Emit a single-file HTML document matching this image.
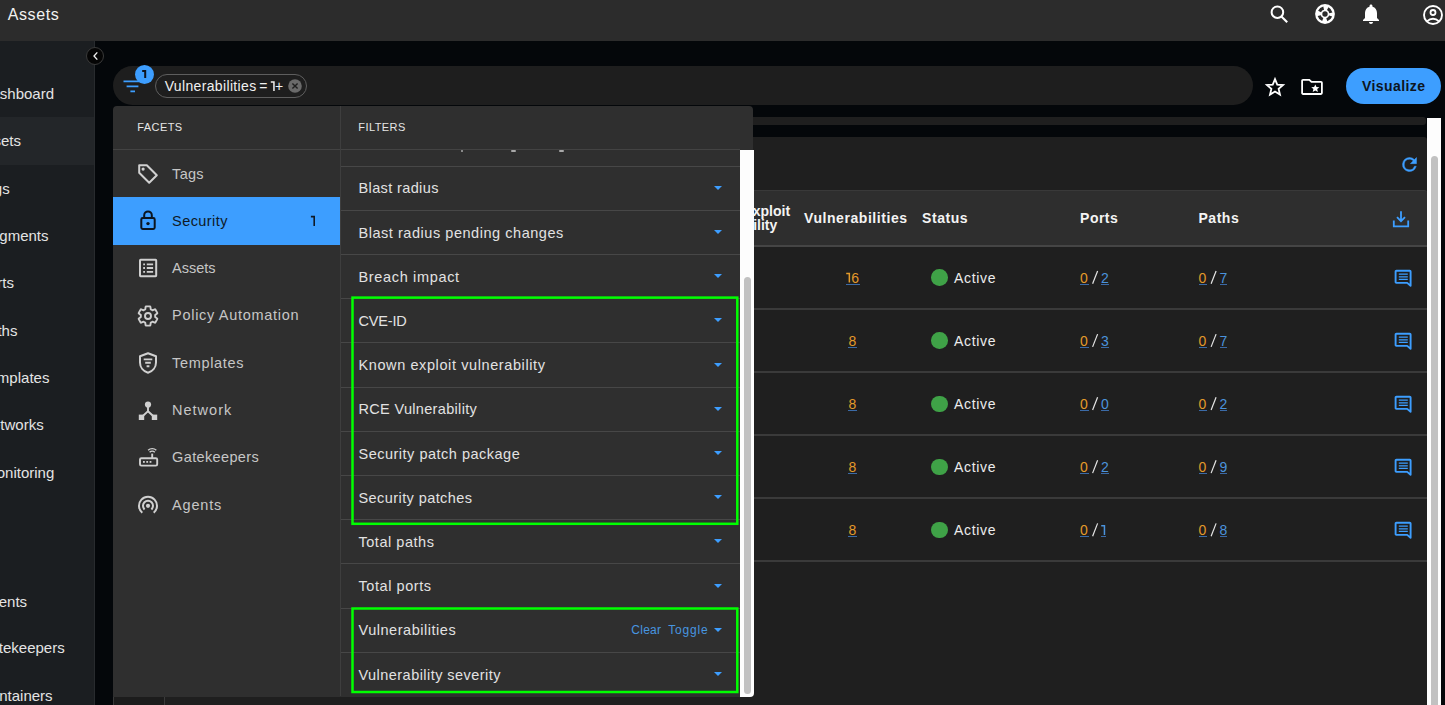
<!DOCTYPE html>
<html><head><meta charset="utf-8"><style>
*{box-sizing:border-box;margin:0;padding:0}
html,body{width:1445px;height:705px;overflow:hidden;background:#04070a;font-family:"Liberation Sans",sans-serif;color:#e6e6e6}
.a{position:absolute}
.t{position:absolute;white-space:nowrap;line-height:1}
svg{position:absolute;display:block;overflow:visible}
</style></head><body>
<div class="a" style="left:0;top:0;width:1445px;height:41px;background:#2c2c2c"></div>
<div class="t" style="left:7.70px;top:7.06px;font-size:16px;color:#f2f2f2;letter-spacing:0.597px;">Assets</div>
<svg style="left:1269px;top:4.2px" width="22" height="22" viewBox="0 0 22 22"><circle cx="8.4" cy="8.2" r="5.8" fill="none" stroke="#fff" stroke-width="2"/><path d="M12.4 12.4L18.2 18.2" stroke="#fff" stroke-width="2.1"/></svg>
<svg style="left:1315px;top:4.3px" width="20" height="20" viewBox="0 0 20 20"><circle cx="10" cy="10" r="9.9" fill="#fff"/><circle cx="10" cy="10" r="6" fill="none" stroke="#2c2c2c" stroke-width="3.2" stroke-dasharray="5.2 4.22" stroke-dashoffset="-2.11"/><circle cx="10" cy="10" r="2.7" fill="#2c2c2c"/></svg>
<svg style="left:1358.9px;top:1.9px" width="24" height="24" viewBox="0 0 24 24"><path d="M12 22c1.1 0 2-.9 2-2h-4c0 1.1.89 2 2 2zm6-6v-5c0-3.07-1.64-5.64-4.5-6.32V4c0-.83-.67-1.5-1.5-1.5s-1.5.67-1.5 1.5v.68C7.63 5.36 6 7.92 6 11v5l-2 2v1h16v-1l-2-2z" fill="#fff"/></svg>
<svg style="left:1423.2px;top:4.6px" width="20" height="20" viewBox="0 0 20 20"><circle cx="10" cy="10" r="9" fill="none" stroke="#fff" stroke-width="1.9"/><circle cx="10" cy="7.5" r="2.5" fill="none" stroke="#fff" stroke-width="1.8"/><path d="M4.3 16.2c1.6-1.6 3.6-2.4 5.7-2.4s4.1.8 5.7 2.4" fill="none" stroke="#fff" stroke-width="1.9"/></svg>
<div class="a" style="left:0;top:41px;width:95px;height:664px;background:#1b1e21;border-right:1px solid #282b2e;overflow:hidden">
<div class="a" style="left:0;top:76px;width:94px;height:48px;background:#232629"></div>
<div class="t" style="right:40.0px;top:45.0px;font-size:15px;color:#e4e4e4">Dashboard</div>
<div class="t" style="right:73.0px;top:92.4px;font-size:15px;color:#e4e4e4">Assets</div>
<div class="t" style="right:84.3px;top:139.8px;font-size:15px;color:#e4e4e4">Tags</div>
<div class="t" style="right:45.5px;top:186.5px;font-size:15px;color:#e4e4e4">Segments</div>
<div class="t" style="right:80.0px;top:234.3px;font-size:15px;color:#e4e4e4">Ports</div>
<div class="t" style="right:76.6px;top:281.8px;font-size:15px;color:#e4e4e4">Paths</div>
<div class="t" style="right:44.6px;top:329.3px;font-size:15px;color:#e4e4e4">Templates</div>
<div class="t" style="right:50.3px;top:376.2px;font-size:15px;color:#e4e4e4">Networks</div>
<div class="t" style="right:39.7px;top:423.7px;font-size:15px;color:#e4e4e4">Monitoring</div>
<div class="t" style="right:66.9px;top:552.5px;font-size:15px;color:#e4e4e4">Events</div>
<div class="t" style="right:29.3px;top:599.3px;font-size:15px;color:#e4e4e4">Gatekeepers</div>
<div class="t" style="right:41.4px;top:646.8px;font-size:15px;color:#e4e4e4">Containers</div>
</div>
<div class="a" style="left:85.5px;top:46.5px;width:18px;height:18px;border-radius:50%;background:#050505;border:1px solid #3a3a3a"></div>
<svg style="left:89.6px;top:49.8px" width="12" height="12" viewBox="0 0 12 12"><path d="M7.3 2.4L4 6l3.3 3.6" fill="none" stroke="#f0f0f0" stroke-width="1.35"/></svg>
<div class="a" style="left:113px;top:66px;width:1140px;height:39px;border-radius:20px;background:#1e1e1e"></div>
<svg style="left:122px;top:79px" width="18" height="14" viewBox="0 0 18 14"><path d="M1.5 2.4h16M4.6 7.4h11.8M8.4 12.3h4.6" stroke="#3d9eff" stroke-width="1.8"/></svg>
<div class="a" style="left:135px;top:65px;width:19px;height:19px;border-radius:50%;background:#3d9eff"></div>
<svg style="left:0;top:0" width="1445" height="705" viewBox="0 0 1445 705"><path d="M142.20 71.10H145.20V77.90" fill="none" stroke="#0f1520" stroke-width="2.0"/></svg>
<div class="a" style="left:155px;top:74px;width:152px;height:24px;border:1px solid #5e5e5e;border-radius:12px"></div>
<div class="t" style="left:164.70px;top:78.95px;font-size:14px;color:#f0f0f0;letter-spacing:0.347px;">Vulnerabilities</div>
<div class="t" style="left:260.20px;top:78.95px;font-size:14px;color:#f0f0f0;letter-spacing:0.000px;margin-left:-1px">=</div>
<svg style="left:0;top:0" width="1445" height="705" viewBox="0 0 1445 705"><path d="M270.80 82.05H273.95V90.90" fill="none" stroke="#f0f0f0" stroke-width="1.5"/></svg>
<div class="t" style="left:275.60px;top:78.95px;font-size:14px;color:#f0f0f0;letter-spacing:0.000px;margin-left:-0.6px">+</div>
<svg style="left:287.5px;top:79px" width="14" height="14" viewBox="0 0 14 14"><circle cx="7" cy="7" r="6.8" fill="#6a6a6a"/><path d="M4.4 4.4l5.2 5.2M9.6 4.4l-5.2 5.2" stroke="#1f1f1f" stroke-width="1.4"/></svg>
<svg style="left:1264.5px;top:76.5px" width="20" height="19" viewBox="0 0 22 21"><path d="M11 2.4l2.5 6 6.4.5-4.9 4.2 1.5 6.3L11 16l-5.5 3.4L7 13.1 2.1 8.9l6.4-.5z" fill="none" stroke="#fff" stroke-width="2" stroke-linejoin="miter"/></svg>
<svg style="left:1300.5px;top:77.5px" width="22" height="18" viewBox="0 0 22 18"><path d="M2 1.8h6.3l2.2 2.1h9.5c.5 0 .9.4.9.9v10.3c0 .5-.4.9-.9.9H2c-.5 0-.9-.4-.9-.9V2.7c0-.5.4-.9.9-.9z" fill="none" stroke="#fff" stroke-width="1.8"/><path d="M14.3 6.4l1.2 2.6 2.9.2-2.2 1.9.7 2.8-2.6-1.5-2.6 1.5.7-2.8-2.2-1.9 2.9-.2z" fill="#fff"/></svg>
<div class="a" style="left:1346px;top:68px;width:95px;height:36px;border-radius:18px;background:#3d9eff"></div>
<div class="t" style="left:1362.00px;top:78.65px;font-size:14px;font-weight:bold;color:#0d1520;letter-spacing:0.417px;">Visualize</div>
<div class="a" style="left:113px;top:117px;width:1313px;height:8px;background:#1f1f1f;border-radius:3px"></div>
<div class="a" style="left:113px;top:137px;width:1314px;height:570px;background:#1f1f1f;border-radius:3px"></div>
<svg style="left:1399px;top:154px" width="21" height="21" viewBox="0 0 24 24"><path d="M17.65 6.35A7.96 7.96 0 0 0 12 4a8 8 0 1 0 7.73 10h-2.08A6 6 0 1 1 12 6c1.66 0 3.14.69 4.22 1.78L13 11h7V4l-2.35 2.35z" fill="#3d9eff" stroke="#3d9eff" stroke-width=".5"/></svg>
<div class="a" style="left:113px;top:190px;width:1314px;height:56px;background:#2e2e2e;border-radius:3px 3px 0 0;border-top:1px solid #393939"></div>
<div class="a" style="left:113px;top:244.5px;width:1314px;height:2px;background:#454545"></div>
<div class="t" style="left:694.44px;top:204.25px;font-size:14px;font-weight:bold;color:#f4f4f4;letter-spacing:0.000px;">Known exploit</div>
<div class="t" style="left:694.83px;top:217.75px;font-size:14px;font-weight:bold;color:#f4f4f4;letter-spacing:0.000px;">vulnerability</div>
<div class="t" style="left:804.00px;top:211.15px;font-size:14px;font-weight:bold;color:#f4f4f4;letter-spacing:0.566px;">Vulnerabilities</div>
<div class="t" style="left:922.10px;top:211.15px;font-size:14px;font-weight:bold;color:#f4f4f4;letter-spacing:0.543px;">Status</div>
<div class="t" style="left:1080.10px;top:211.15px;font-size:14px;font-weight:bold;color:#f4f4f4;letter-spacing:0.478px;">Ports</div>
<div class="t" style="left:1198.50px;top:211.15px;font-size:14px;font-weight:bold;color:#f4f4f4;letter-spacing:0.519px;">Paths</div>
<svg style="left:1392px;top:209px" width="18" height="19" viewBox="0 0 18 19"><path d="M9 2.2v10M5 8.2l4 4 4-4" fill="none" stroke="#3d9eff" stroke-width="1.8"/><path d="M1.8 11.5v5.8h14.4v-5.8" fill="none" stroke="#3d9eff" stroke-width="1.8"/></svg>
<div class="a" style="left:113px;top:307.6px;width:1314px;height:2px;background:#3a3a3a"></div>
<svg style="left:0;top:0" width="1445" height="705" viewBox="0 0 1445 705"><path d="M846.20 273.55H849.35V282.60" fill="none" stroke="#e39a2a" stroke-width="1.5"/></svg>
<div class="t" style="left:851.20px;top:270.75px;font-size:14px;color:#e39a2a;letter-spacing:0.000px;">6</div>
<div class="a" style="left:846px;top:283.9px;width:14px;height:1px;background:#3b6aa6"></div>
<div class="a" style="left:931.3px;top:269.3px;width:16.6px;height:16.6px;border-radius:50%;background:#3fa247"></div>
<div class="t" style="left:953.90px;top:270.75px;font-size:14px;color:#ececec;letter-spacing:0.715px;">Active</div>
<div class="t" style="left:1080.00px;top:270.75px;font-size:14px;color:#e39a2a;letter-spacing:0.000px;">0</div>
<div class="a" style="left:1080.0px;top:283.9px;width:8.8px;height:1px;background:#3b6aa6"></div>
<svg style="left:0;top:0" width="1445" height="705" viewBox="0 0 1445 705"><path d="M1097.60 271.00L1092.60 283.80" stroke="#e6e6e6" stroke-width="1.2"/></svg>
<div class="t" style="left:1101.00px;top:270.75px;font-size:14px;color:#4b93dc;letter-spacing:0.000px;">2</div>
<div class="a" style="left:1101.4px;top:283.9px;width:7.6px;height:1px;background:#3b6aa6"></div>
<div class="t" style="left:1198.50px;top:270.75px;font-size:14px;color:#e39a2a;letter-spacing:0.000px;">0</div>
<div class="a" style="left:1198.5px;top:283.9px;width:8.8px;height:1px;background:#3b6aa6"></div>
<svg style="left:0;top:0" width="1445" height="705" viewBox="0 0 1445 705"><path d="M1216.10 271.00L1211.10 283.80" stroke="#e6e6e6" stroke-width="1.2"/></svg>
<div class="t" style="left:1219.50px;top:270.75px;font-size:14px;color:#4b93dc;letter-spacing:0.000px;">7</div>
<div class="a" style="left:1219.9px;top:283.9px;width:7.6px;height:1px;background:#3b6aa6"></div>
<svg style="left:1394.3px;top:268.9px" width="19" height="19" viewBox="0 0 19 19"><path d="M2.4 1.8h13.4c.5 0 .8.3.8.8v14.2l-3.4-2.9H2.4c-.5 0-.8-.3-.8-.8V2.6c0-.5.3-.8.8-.8z" fill="none" stroke="#3d9eff" stroke-width="1.9" stroke-linejoin="round"/><path d="M4.8 5.2h9M4.8 7.8h9M4.8 10.3h9" stroke="#3d9eff" stroke-width="1.3"/></svg>
<div class="a" style="left:113px;top:370.7px;width:1314px;height:2px;background:#3a3a3a"></div>
<div class="t" style="left:848.60px;top:333.85px;font-size:14px;color:#e39a2a;letter-spacing:0.000px;">8</div>
<div class="a" style="left:848.3px;top:347.0px;width:8.8px;height:1px;background:#3b6aa6"></div>
<div class="a" style="left:931.3px;top:332.4px;width:16.6px;height:16.6px;border-radius:50%;background:#3fa247"></div>
<div class="t" style="left:953.90px;top:333.85px;font-size:14px;color:#ececec;letter-spacing:0.715px;">Active</div>
<div class="t" style="left:1080.00px;top:333.85px;font-size:14px;color:#e39a2a;letter-spacing:0.000px;">0</div>
<div class="a" style="left:1080.0px;top:347.0px;width:8.8px;height:1px;background:#3b6aa6"></div>
<svg style="left:0;top:0" width="1445" height="705" viewBox="0 0 1445 705"><path d="M1097.60 334.10L1092.60 346.90" stroke="#e6e6e6" stroke-width="1.2"/></svg>
<div class="t" style="left:1101.00px;top:333.85px;font-size:14px;color:#4b93dc;letter-spacing:0.000px;">3</div>
<div class="a" style="left:1101.4px;top:347.0px;width:7.6px;height:1px;background:#3b6aa6"></div>
<div class="t" style="left:1198.50px;top:333.85px;font-size:14px;color:#e39a2a;letter-spacing:0.000px;">0</div>
<div class="a" style="left:1198.5px;top:347.0px;width:8.8px;height:1px;background:#3b6aa6"></div>
<svg style="left:0;top:0" width="1445" height="705" viewBox="0 0 1445 705"><path d="M1216.10 334.10L1211.10 346.90" stroke="#e6e6e6" stroke-width="1.2"/></svg>
<div class="t" style="left:1219.50px;top:333.85px;font-size:14px;color:#4b93dc;letter-spacing:0.000px;">7</div>
<div class="a" style="left:1219.9px;top:347.0px;width:7.6px;height:1px;background:#3b6aa6"></div>
<svg style="left:1394.3px;top:332.0px" width="19" height="19" viewBox="0 0 19 19"><path d="M2.4 1.8h13.4c.5 0 .8.3.8.8v14.2l-3.4-2.9H2.4c-.5 0-.8-.3-.8-.8V2.6c0-.5.3-.8.8-.8z" fill="none" stroke="#3d9eff" stroke-width="1.9" stroke-linejoin="round"/><path d="M4.8 5.2h9M4.8 7.8h9M4.8 10.3h9" stroke="#3d9eff" stroke-width="1.3"/></svg>
<div class="a" style="left:113px;top:433.8px;width:1314px;height:2px;background:#3a3a3a"></div>
<div class="t" style="left:848.60px;top:396.95px;font-size:14px;color:#e39a2a;letter-spacing:0.000px;">8</div>
<div class="a" style="left:848.3px;top:410.1px;width:8.8px;height:1px;background:#3b6aa6"></div>
<div class="a" style="left:931.3px;top:395.5px;width:16.6px;height:16.6px;border-radius:50%;background:#3fa247"></div>
<div class="t" style="left:953.90px;top:396.95px;font-size:14px;color:#ececec;letter-spacing:0.715px;">Active</div>
<div class="t" style="left:1080.00px;top:396.95px;font-size:14px;color:#e39a2a;letter-spacing:0.000px;">0</div>
<div class="a" style="left:1080.0px;top:410.1px;width:8.8px;height:1px;background:#3b6aa6"></div>
<svg style="left:0;top:0" width="1445" height="705" viewBox="0 0 1445 705"><path d="M1097.60 397.20L1092.60 410.00" stroke="#e6e6e6" stroke-width="1.2"/></svg>
<div class="t" style="left:1101.00px;top:396.95px;font-size:14px;color:#4b93dc;letter-spacing:0.000px;">0</div>
<div class="a" style="left:1101.4px;top:410.1px;width:7.6px;height:1px;background:#3b6aa6"></div>
<div class="t" style="left:1198.50px;top:396.95px;font-size:14px;color:#e39a2a;letter-spacing:0.000px;">0</div>
<div class="a" style="left:1198.5px;top:410.1px;width:8.8px;height:1px;background:#3b6aa6"></div>
<svg style="left:0;top:0" width="1445" height="705" viewBox="0 0 1445 705"><path d="M1216.10 397.20L1211.10 410.00" stroke="#e6e6e6" stroke-width="1.2"/></svg>
<div class="t" style="left:1219.50px;top:396.95px;font-size:14px;color:#4b93dc;letter-spacing:0.000px;">2</div>
<div class="a" style="left:1219.9px;top:410.1px;width:7.6px;height:1px;background:#3b6aa6"></div>
<svg style="left:1394.3px;top:395.1px" width="19" height="19" viewBox="0 0 19 19"><path d="M2.4 1.8h13.4c.5 0 .8.3.8.8v14.2l-3.4-2.9H2.4c-.5 0-.8-.3-.8-.8V2.6c0-.5.3-.8.8-.8z" fill="none" stroke="#3d9eff" stroke-width="1.9" stroke-linejoin="round"/><path d="M4.8 5.2h9M4.8 7.8h9M4.8 10.3h9" stroke="#3d9eff" stroke-width="1.3"/></svg>
<div class="a" style="left:113px;top:496.9px;width:1314px;height:2px;background:#3a3a3a"></div>
<div class="t" style="left:848.60px;top:460.05px;font-size:14px;color:#e39a2a;letter-spacing:0.000px;">8</div>
<div class="a" style="left:848.3px;top:473.2px;width:8.8px;height:1px;background:#3b6aa6"></div>
<div class="a" style="left:931.3px;top:458.6px;width:16.6px;height:16.6px;border-radius:50%;background:#3fa247"></div>
<div class="t" style="left:953.90px;top:460.05px;font-size:14px;color:#ececec;letter-spacing:0.715px;">Active</div>
<div class="t" style="left:1080.00px;top:460.05px;font-size:14px;color:#e39a2a;letter-spacing:0.000px;">0</div>
<div class="a" style="left:1080.0px;top:473.2px;width:8.8px;height:1px;background:#3b6aa6"></div>
<svg style="left:0;top:0" width="1445" height="705" viewBox="0 0 1445 705"><path d="M1097.60 460.30L1092.60 473.10" stroke="#e6e6e6" stroke-width="1.2"/></svg>
<div class="t" style="left:1101.00px;top:460.05px;font-size:14px;color:#4b93dc;letter-spacing:0.000px;">2</div>
<div class="a" style="left:1101.4px;top:473.2px;width:7.6px;height:1px;background:#3b6aa6"></div>
<div class="t" style="left:1198.50px;top:460.05px;font-size:14px;color:#e39a2a;letter-spacing:0.000px;">0</div>
<div class="a" style="left:1198.5px;top:473.2px;width:8.8px;height:1px;background:#3b6aa6"></div>
<svg style="left:0;top:0" width="1445" height="705" viewBox="0 0 1445 705"><path d="M1216.10 460.30L1211.10 473.10" stroke="#e6e6e6" stroke-width="1.2"/></svg>
<div class="t" style="left:1219.50px;top:460.05px;font-size:14px;color:#4b93dc;letter-spacing:0.000px;">9</div>
<div class="a" style="left:1219.9px;top:473.2px;width:7.6px;height:1px;background:#3b6aa6"></div>
<svg style="left:1394.3px;top:458.2px" width="19" height="19" viewBox="0 0 19 19"><path d="M2.4 1.8h13.4c.5 0 .8.3.8.8v14.2l-3.4-2.9H2.4c-.5 0-.8-.3-.8-.8V2.6c0-.5.3-.8.8-.8z" fill="none" stroke="#3d9eff" stroke-width="1.9" stroke-linejoin="round"/><path d="M4.8 5.2h9M4.8 7.8h9M4.8 10.3h9" stroke="#3d9eff" stroke-width="1.3"/></svg>
<div class="a" style="left:113px;top:560.0px;width:1314px;height:2px;background:#3a3a3a"></div>
<div class="t" style="left:848.60px;top:523.15px;font-size:14px;color:#e39a2a;letter-spacing:0.000px;">8</div>
<div class="a" style="left:848.3px;top:536.3px;width:8.8px;height:1px;background:#3b6aa6"></div>
<div class="a" style="left:931.3px;top:521.7px;width:16.6px;height:16.6px;border-radius:50%;background:#3fa247"></div>
<div class="t" style="left:953.90px;top:523.15px;font-size:14px;color:#ececec;letter-spacing:0.715px;">Active</div>
<div class="t" style="left:1080.00px;top:523.15px;font-size:14px;color:#e39a2a;letter-spacing:0.000px;">0</div>
<div class="a" style="left:1080.0px;top:536.3px;width:8.8px;height:1px;background:#3b6aa6"></div>
<svg style="left:0;top:0" width="1445" height="705" viewBox="0 0 1445 705"><path d="M1097.60 523.40L1092.60 536.20" stroke="#e6e6e6" stroke-width="1.2"/></svg>
<svg style="left:0;top:0" width="1445" height="705" viewBox="0 0 1445 705"><path d="M1101.20 525.85H1104.45V535.00" fill="none" stroke="#4b93dc" stroke-width="1.5"/></svg>
<div class="a" style="left:1101.2px;top:536.3px;width:5px;height:1px;background:#3b6aa6"></div>
<div class="t" style="left:1198.50px;top:523.15px;font-size:14px;color:#e39a2a;letter-spacing:0.000px;">0</div>
<div class="a" style="left:1198.5px;top:536.3px;width:8.8px;height:1px;background:#3b6aa6"></div>
<svg style="left:0;top:0" width="1445" height="705" viewBox="0 0 1445 705"><path d="M1216.10 523.40L1211.10 536.20" stroke="#e6e6e6" stroke-width="1.2"/></svg>
<div class="t" style="left:1219.50px;top:523.15px;font-size:14px;color:#4b93dc;letter-spacing:0.000px;">8</div>
<div class="a" style="left:1219.9px;top:536.3px;width:7.6px;height:1px;background:#3b6aa6"></div>
<svg style="left:1394.3px;top:521.3px" width="19" height="19" viewBox="0 0 19 19"><path d="M2.4 1.8h13.4c.5 0 .8.3.8.8v14.2l-3.4-2.9H2.4c-.5 0-.8-.3-.8-.8V2.6c0-.5.3-.8.8-.8z" fill="none" stroke="#3d9eff" stroke-width="1.9" stroke-linejoin="round"/><path d="M4.8 5.2h9M4.8 7.8h9M4.8 10.3h9" stroke="#3d9eff" stroke-width="1.3"/></svg>
<div class="a" style="left:1427px;top:117.5px;width:14px;height:590px;background:#fdfdfd"></div>
<div class="a" style="left:1431px;top:156px;width:7px;height:560px;background:#c1c1c1;border-radius:4px"></div>
<div class="a" style="left:113px;top:106px;width:640px;height:590.5px;background:#2f2f2f;border-radius:4px 4px 4px 0;overflow:hidden"></div>
<div class="a" style="left:113px;top:149px;width:627px;height:1px;background:#434343"></div>
<div class="a" style="left:340px;top:106px;width:1px;height:590px;background:#3e3e3e"></div>
<div class="t" style="left:137.30px;top:121.79px;font-size:11px;color:#e6e6e6;letter-spacing:0.423px;">FACETS</div>
<div class="t" style="left:358.30px;top:121.79px;font-size:11px;color:#e6e6e6;letter-spacing:0.431px;">FILTERS</div>
<div class="a" style="left:113px;top:197px;width:227px;height:48px;background:#3d9eff"></div>
<div class="t" style="left:172.10px;top:166.53px;font-size:14.5px;color:#c6c6c6;letter-spacing:0.291px;">Tags</div>
<div class="t" style="left:172.10px;top:213.83px;font-size:14.5px;color:#0f1a26;letter-spacing:0.417px;">Security</div>
<div class="t" style="left:172.10px;top:261.13px;font-size:14.5px;color:#c6c6c6;letter-spacing:-0.003px;">Assets</div>
<div class="t" style="left:172.10px;top:308.43px;font-size:14.5px;color:#c6c6c6;letter-spacing:0.696px;">Policy Automation</div>
<div class="t" style="left:172.10px;top:355.73px;font-size:14.5px;color:#c6c6c6;letter-spacing:0.652px;">Templates</div>
<div class="t" style="left:172.10px;top:403.03px;font-size:14.5px;color:#c6c6c6;letter-spacing:0.987px;">Network</div>
<div class="t" style="left:172.10px;top:450.33px;font-size:14.5px;color:#c6c6c6;letter-spacing:0.358px;">Gatekeepers</div>
<div class="t" style="left:172.10px;top:497.63px;font-size:14.5px;color:#c6c6c6;letter-spacing:0.811px;">Agents</div>
<svg style="left:0;top:0" width="1445" height="705" viewBox="0 0 1445 705"><path d="M310.90 216.60H314.20V226.10" fill="none" stroke="#0f1a26" stroke-width="1.6"/></svg>
<svg style="left:136px;top:162px" width="24" height="24" viewBox="0 0 24 24"><path d="M3.2 3.2h7.6l10 10-7.6 7.6-10-10z" fill="none" stroke="#d0d0d0" stroke-width="2" stroke-linejoin="round"/><circle cx="7.1" cy="7.1" r="1.6" fill="#d0d0d0"/></svg>
<svg style="left:136px;top:208px" width="24" height="24" viewBox="0 0 24 24"><path d="M8.2 10V7.2a3.8 3.8 0 0 1 7.6 0V10" fill="none" stroke="#0b1520" stroke-width="2"/><rect x="5.3" y="10" width="13.4" height="11" rx="1.4" fill="none" stroke="#0b1520" stroke-width="2"/><circle cx="12" cy="15.6" r="1.7" fill="#0b1520"/></svg>
<svg style="left:136px;top:256px" width="24" height="24" viewBox="0 0 24 24"><rect x="4" y="3.8" width="16.2" height="16.4" rx=".6" fill="none" stroke="#d0d0d0" stroke-width="2"/><path d="M7.2 8.3h1.8M7.2 12h1.8M7.2 15.8h1.8M10.8 8.3h6.3M10.8 12h6.3M10.8 15.8h6.3" stroke="#d0d0d0" stroke-width="1.8"/></svg>
<svg style="left:136px;top:303.5px" width="24" height="24" viewBox="0 0 24 24"><path d="M19.14 12.94c.04-.3.06-.61.06-.94 0-.32-.02-.64-.07-.94l2.03-1.58a.49.49 0 0 0 .12-.61l-1.92-3.32a.488.488 0 0 0-.59-.22l-2.39.96c-.5-.38-1.03-.7-1.62-.94l-.36-2.54a.484.484 0 0 0-.48-.41h-3.84c-.24 0-.43.17-.47.41l-.36 2.54c-.59.24-1.13.57-1.62.94l-2.39-.96c-.22-.08-.47 0-.59.22L2.74 8.87c-.12.21-.08.47.12.61l2.03 1.58c-.05.3-.09.63-.09.94s.02.64.07.94l-2.03 1.58a.49.49 0 0 0-.12.61l1.92 3.32c.12.22.37.29.59.22l2.39-.96c.5.38 1.03.7 1.62.94l.36 2.54c.05.24.24.41.48.41h3.84c.24 0 .44-.17.47-.41l.36-2.54c.59-.24 1.13-.56 1.62-.94l2.39.96c.22.08.47 0 .59-.22l1.92-3.32c.12-.22.07-.47-.12-.61l-2.01-1.58z" fill="none" stroke="#d0d0d0" stroke-width="1.9" stroke-linejoin="round"/><circle cx="12" cy="12" r="3" fill="none" stroke="#d0d0d0" stroke-width="1.9"/></svg>
<svg style="left:136px;top:350.5px" width="24" height="24" viewBox="0 0 24 24"><path d="M12 2.2l8 3v6.3c0 4.8-3.3 8.9-8 10.3-4.7-1.4-8-5.5-8-10.3V5.2z" fill="none" stroke="#d0d0d0" stroke-width="2" stroke-linejoin="round"/><path d="M7.7 8.4h8.6M9.2 11.8h5.6M10.6 15.2h2.8" stroke="#d0d0d0" stroke-width="1.9"/></svg>
<svg style="left:136px;top:397.5px" width="24" height="24" viewBox="0 0 24 24"><circle cx="12" cy="6.6" r="3.1" fill="#d0d0d0"/><path d="M12 8v5.2L5.5 19.2M12 13.2l6.5 6" fill="none" stroke="#d0d0d0" stroke-width="1.9"/><rect x="2.8" y="16.6" width="5.4" height="5.4" fill="#d0d0d0"/><rect x="15.8" y="16.6" width="5.4" height="5.4" fill="#d0d0d0"/></svg>
<svg style="left:136px;top:445px" width="24" height="24" viewBox="0 0 24 24"><rect x="4" y="13.2" width="17.2" height="7.4" rx="1.4" fill="none" stroke="#d0d0d0" stroke-width="1.9"/><path d="M16.2 13.2V8.6" stroke="#d0d0d0" stroke-width="1.9"/><path d="M13.6 7.2a3.7 3.7 0 0 1 5.2 0M12.1 5.2a6 6 0 0 1 8.2 0" fill="none" stroke="#d0d0d0" stroke-width="1.4"/><rect x="7" y="16" width="1.8" height="1.8" fill="#d0d0d0"/><rect x="10.3" y="16" width="1.8" height="1.8" fill="#d0d0d0"/><rect x="13.6" y="16" width="1.8" height="1.8" fill="#d0d0d0"/></svg>
<svg style="left:136px;top:492.5px" width="24" height="24" viewBox="0 0 24 24"><circle cx="12" cy="12.8" r="2.1" fill="#d0d0d0"/><path d="M8.6 16.4a5 5 0 1 1 6.8 0M6.3 19.7a9 9 0 1 1 11.4 0" fill="none" stroke="#d0d0d0" stroke-width="2"/></svg>
<div class="a" style="left:341px;top:150px;width:399px;height:546px;overflow:hidden">
<div class="a" style="left:0;top:15.5px;width:399px;height:1px;background:#474747"></div>
<div class="a" style="left:0;top:59.7px;width:399px;height:1px;background:#474747"></div>
<div class="a" style="left:0;top:103.9px;width:399px;height:1px;background:#474747"></div>
<div class="a" style="left:0;top:148.1px;width:399px;height:1px;background:#474747"></div>
<div class="a" style="left:0;top:192.3px;width:399px;height:1px;background:#474747"></div>
<div class="a" style="left:0;top:236.5px;width:399px;height:1px;background:#474747"></div>
<div class="a" style="left:0;top:280.7px;width:399px;height:1px;background:#474747"></div>
<div class="a" style="left:0;top:324.9px;width:399px;height:1px;background:#474747"></div>
<div class="a" style="left:0;top:369.1px;width:399px;height:1px;background:#474747"></div>
<div class="a" style="left:0;top:413.3px;width:399px;height:1px;background:#474747"></div>
<div class="a" style="left:0;top:457.5px;width:399px;height:1px;background:#474747"></div>
<div class="a" style="left:0;top:501.7px;width:399px;height:1px;background:#474747"></div>
</div>
<div class="a" style="left:461.3px;top:150.2px;width:2px;height:1.4px;border-radius:1px;background:#a8a8a8"></div>
<div class="a" style="left:511.4px;top:150.2px;width:4.5px;height:1.4px;border-radius:1px;background:#a8a8a8"></div>
<div class="a" style="left:559.0px;top:150.2px;width:4.5px;height:1.4px;border-radius:1px;background:#a8a8a8"></div>
<div class="t" style="left:358.50px;top:181.33px;font-size:14.5px;color:#e2e2e2;letter-spacing:0.377px;">Blast radius</div>
<div class="a" style="left:714px;top:185.8px;width:0;height:0;border-left:4.1px solid transparent;border-right:4.1px solid transparent;border-top:4.6px solid #3d9eff"></div>
<div class="t" style="left:358.50px;top:225.53px;font-size:14.5px;color:#e2e2e2;letter-spacing:0.539px;">Blast radius pending changes</div>
<div class="a" style="left:714px;top:230.0px;width:0;height:0;border-left:4.1px solid transparent;border-right:4.1px solid transparent;border-top:4.6px solid #3d9eff"></div>
<div class="t" style="left:358.50px;top:269.73px;font-size:14.5px;color:#e2e2e2;letter-spacing:0.660px;">Breach impact</div>
<div class="a" style="left:714px;top:274.2px;width:0;height:0;border-left:4.1px solid transparent;border-right:4.1px solid transparent;border-top:4.6px solid #3d9eff"></div>
<div class="t" style="left:358.50px;top:313.93px;font-size:14.5px;color:#e2e2e2;letter-spacing:-0.189px;">CVE-ID</div>
<div class="a" style="left:714px;top:318.4px;width:0;height:0;border-left:4.1px solid transparent;border-right:4.1px solid transparent;border-top:4.6px solid #3d9eff"></div>
<div class="t" style="left:358.50px;top:358.13px;font-size:14.5px;color:#e2e2e2;letter-spacing:0.597px;">Known exploit vulnerability</div>
<div class="a" style="left:714px;top:362.6px;width:0;height:0;border-left:4.1px solid transparent;border-right:4.1px solid transparent;border-top:4.6px solid #3d9eff"></div>
<div class="t" style="left:358.50px;top:402.33px;font-size:14.5px;color:#e2e2e2;letter-spacing:0.326px;">RCE Vulnerability</div>
<div class="a" style="left:714px;top:406.8px;width:0;height:0;border-left:4.1px solid transparent;border-right:4.1px solid transparent;border-top:4.6px solid #3d9eff"></div>
<div class="t" style="left:358.50px;top:446.53px;font-size:14.5px;color:#e2e2e2;letter-spacing:0.499px;">Security patch package</div>
<div class="a" style="left:714px;top:451.0px;width:0;height:0;border-left:4.1px solid transparent;border-right:4.1px solid transparent;border-top:4.6px solid #3d9eff"></div>
<div class="t" style="left:358.50px;top:490.73px;font-size:14.5px;color:#e2e2e2;letter-spacing:0.421px;">Security patches</div>
<div class="a" style="left:714px;top:495.2px;width:0;height:0;border-left:4.1px solid transparent;border-right:4.1px solid transparent;border-top:4.6px solid #3d9eff"></div>
<div class="t" style="left:358.50px;top:534.93px;font-size:14.5px;color:#e2e2e2;letter-spacing:0.527px;">Total paths</div>
<div class="a" style="left:714px;top:539.4px;width:0;height:0;border-left:4.1px solid transparent;border-right:4.1px solid transparent;border-top:4.6px solid #3d9eff"></div>
<div class="t" style="left:358.50px;top:579.13px;font-size:14.5px;color:#e2e2e2;letter-spacing:0.561px;">Total ports</div>
<div class="a" style="left:714px;top:583.6px;width:0;height:0;border-left:4.1px solid transparent;border-right:4.1px solid transparent;border-top:4.6px solid #3d9eff"></div>
<div class="t" style="left:358.50px;top:623.33px;font-size:14.5px;color:#e2e2e2;letter-spacing:0.533px;">Vulnerabilities</div>
<div class="a" style="left:714px;top:627.8px;width:0;height:0;border-left:4.1px solid transparent;border-right:4.1px solid transparent;border-top:4.6px solid #3d9eff"></div>
<div class="t" style="left:358.50px;top:667.53px;font-size:14.5px;color:#e2e2e2;letter-spacing:0.456px;">Vulnerability severity</div>
<div class="a" style="left:714px;top:672.0px;width:0;height:0;border-left:4.1px solid transparent;border-right:4.1px solid transparent;border-top:4.6px solid #3d9eff"></div>
<div class="t" style="left:631.30px;top:624.14px;font-size:12px;color:#4796e0;letter-spacing:0.256px;">Clear</div>
<div class="t" style="left:668.20px;top:624.14px;font-size:12px;color:#4796e0;letter-spacing:0.808px;">Toggle</div>
<div class="a" style="left:740px;top:149.5px;width:13.5px;height:547px;background:#fdfdfd;border-radius:0 0 4px 0"></div>
<div class="a" style="left:743.8px;top:277.3px;width:7px;height:416.7px;background:#c1c1c1;border-radius:3.5px"></div>
<svg style="left:0;top:0" width="1445" height="705" viewBox="0 0 1445 705"><rect x="352.5" y="297.6" width="384.8" height="226.2" fill="none" stroke="#00ff00" stroke-width="2.5"/><rect x="352.5" y="608.5" width="384.8" height="83.5" fill="none" stroke="#00ff00" stroke-width="2.5"/></svg>
<div class="a" style="left:163.5px;top:696.5px;width:1px;height:9px;background:#3a3a3a"></div>
<div class="a" style="left:113px;top:696.5px;width:1px;height:9px;background:#393939"></div>
<div class="a" style="left:114px;top:696.5px;width:50px;height:9px;background:#1c1c1c"></div>
</body></html>
